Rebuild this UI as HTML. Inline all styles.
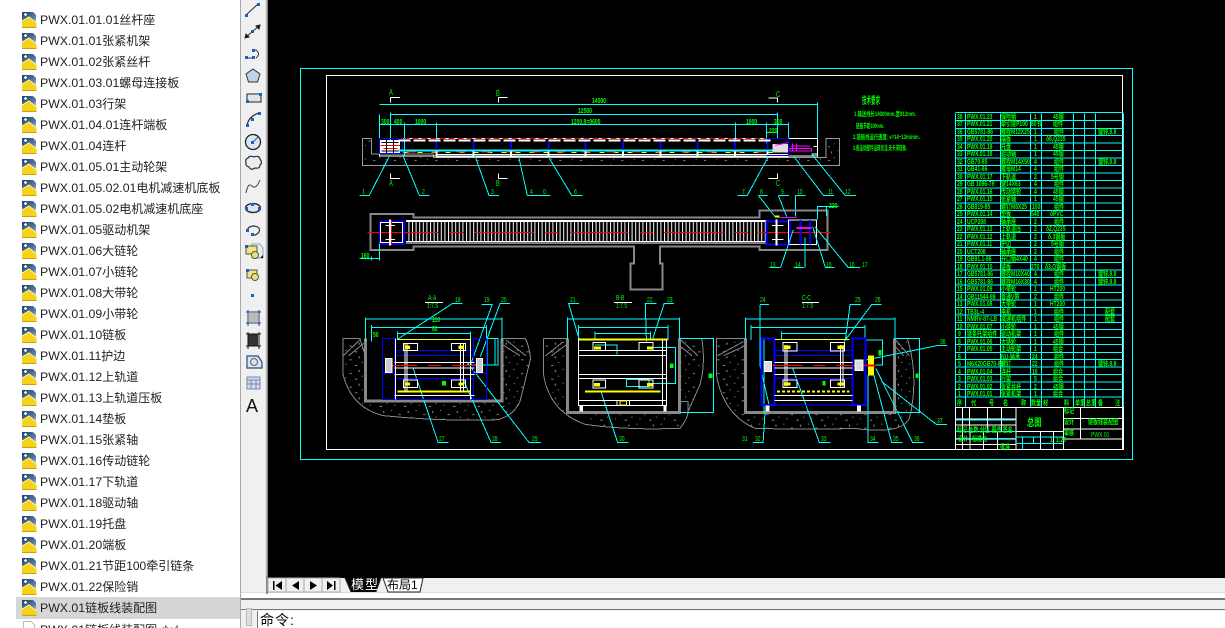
<!DOCTYPE html>
<html><head><meta charset="utf-8"><style>
html,body{margin:0;padding:0;width:1225px;height:628px;overflow:hidden;background:#fff}
body{position:relative;font-family:"Liberation Sans","Noto Sans CJK SC",sans-serif}
#list{position:absolute;left:0;top:0;width:240px;height:628px;overflow:hidden;background:#fff}
#list div{position:absolute;left:16px;width:224px;height:21px;line-height:22px;font-size:12px;color:#222;white-space:nowrap;padding-left:24px;box-sizing:border-box}
#list div.s{background:#d6d6d6;height:22px}
#list i{font-style:normal;font-size:12.3px}
#list svg{position:absolute;left:5px;top:2px;width:16px;height:17px}
#tb{position:absolute;left:240px;top:0;width:28px;height:578px;background:#f0f0f0;border-left:1px solid #a8a8a8;box-sizing:border-box}
#tb:after{content:"";position:absolute;right:0;top:0;width:3px;height:578px;background:linear-gradient(90deg,#fff,#a0a0a0 60%,#777)}
#cv{position:absolute;left:268px;top:0;width:957px;height:578px;background:#000}
#bot{position:absolute;left:240px;top:578px;width:985px;height:50px;background:#f0f0f0;border-left:1px solid #a8a8a8;box-sizing:border-box}
#cmd{position:absolute;left:257px;top:611px;width:968px;height:17px;background:#fff;font-size:14px;line-height:18px;letter-spacing:1px;color:#000;padding-left:2px;box-sizing:border-box;border-left:1px solid #777}
svg text{font-family:"Liberation Sans","Noto Sans CJK SC",sans-serif}
.t text{transform-box:fill-box;transform-origin:0 50%;transform:scaleX(.72)}
</style></head><body>
<svg width="0" height="0" style="position:absolute"><defs>
<linearGradient id="bl" x1="0" y1="0" x2="1" y2="1"><stop offset="0" stop-color="#1c3f6e"/><stop offset=".7" stop-color="#5d7fa3"/><stop offset="1" stop-color="#c9d5e0"/></linearGradient>
<symbol id="ic" viewBox="0 0 16 17"><path d="M1 1H12L15 4V12L1 9Z" fill="url(#bl)"/><path d="M3 3.500h3M4.500 2v3" stroke="#fff" stroke-width="1.200"/><path d="M1 10L8 6L15.500 12V16.500H1Z" fill="#f6d21c"/><path d="M1 10L8 6L15.500 12" fill="none" stroke="#fff59a"/><path d="M1 16.500H15.500" stroke="#c9a30a"/></symbol>
<pattern id="chain" width="10.800" height="60" patternUnits="userSpaceOnUse"><rect width="3" height="60" fill="#fff"/></pattern>
<pattern id="sp" width="62" height="41" patternUnits="userSpaceOnUse"><rect x="5" y="6" width="3" height="3" fill="#888"/><rect x="24" y="18" width="6" height="3" fill="#888"/><rect x="47" y="9" width="3" height="6" fill="#888"/><rect x="13" y="31" width="3" height="3" fill="#888"/><rect x="38" y="35" width="6" height="3" fill="#888"/><rect x="55" y="26" width="3" height="3" fill="#888"/></pattern>
</defs></svg>

<div id="list">
<div style="top:9px"><svg><use href="#ic"/></svg><i>PWX.01.01.01</i>丝杆座</div>
<div style="top:30px"><svg><use href="#ic"/></svg><i>PWX.01.01</i>张紧机架</div>
<div style="top:51px"><svg><use href="#ic"/></svg><i>PWX.01.02</i>张紧丝杆</div>
<div style="top:72px"><svg><use href="#ic"/></svg><i>PWX.01.03.01</i>螺母连接板</div>
<div style="top:93px"><svg><use href="#ic"/></svg><i>PWX.01.03</i>行架</div>
<div style="top:114px"><svg><use href="#ic"/></svg><i>PWX.01.04.01</i>连杆端板</div>
<div style="top:135px"><svg><use href="#ic"/></svg><i>PWX.01.04</i>连杆</div>
<div style="top:156px"><svg><use href="#ic"/></svg><i>PWX.01.05.01</i>主动轮架</div>
<div style="top:177px"><svg><use href="#ic"/></svg><i>PWX.01.05.02.01</i>电机减速机底板</div>
<div style="top:198px"><svg><use href="#ic"/></svg><i>PWX.01.05.02</i>电机减速机底座</div>
<div style="top:219px"><svg><use href="#ic"/></svg><i>PWX.01.05</i>驱动机架</div>
<div style="top:240px"><svg><use href="#ic"/></svg><i>PWX.01.06</i>大链轮</div>
<div style="top:261px"><svg><use href="#ic"/></svg><i>PWX.01.07</i>小链轮</div>
<div style="top:282px"><svg><use href="#ic"/></svg><i>PWX.01.08</i>大带轮</div>
<div style="top:303px"><svg><use href="#ic"/></svg><i>PWX.01.09</i>小带轮</div>
<div style="top:324px"><svg><use href="#ic"/></svg><i>PWX.01.10</i>链板</div>
<div style="top:345px"><svg><use href="#ic"/></svg><i>PWX.01.11</i>护边</div>
<div style="top:366px"><svg><use href="#ic"/></svg><i>PWX.01.12</i>上轨道</div>
<div style="top:387px"><svg><use href="#ic"/></svg><i>PWX.01.13</i>上轨道压板</div>
<div style="top:408px"><svg><use href="#ic"/></svg><i>PWX.01.14</i>垫板</div>
<div style="top:429px"><svg><use href="#ic"/></svg><i>PWX.01.15</i>张紧轴</div>
<div style="top:450px"><svg><use href="#ic"/></svg><i>PWX.01.16</i>传动链轮</div>
<div style="top:471px"><svg><use href="#ic"/></svg><i>PWX.01.17</i>下轨道</div>
<div style="top:492px"><svg><use href="#ic"/></svg><i>PWX.01.18</i>驱动轴</div>
<div style="top:513px"><svg><use href="#ic"/></svg><i>PWX.01.19</i>托盘</div>
<div style="top:534px"><svg><use href="#ic"/></svg><i>PWX.01.20</i>端板</div>
<div style="top:555px"><svg><use href="#ic"/></svg><i>PWX.01.21</i>节距100牵引链条</div>
<div style="top:576px"><svg><use href="#ic"/></svg><i>PWX.01.22</i>保险销</div>
<div class="s" style="top:597px"><svg><use href="#ic"/></svg><i>PWX.01</i>链板线装配图</div>
<div style="top:619px"><svg viewBox="0 0 16 17"><path d="M2.500 .5H10L13.500 4V16.500H2.500Z" fill="#fff" stroke="#bbb"/></svg><i>PWX.01</i>链板线装配图.dwl</div>
</div>

<div id="tb"></div>
<svg style="position:absolute;left:240px;top:0" width="25" height="425" viewBox="0 0 25 425">
<g fill="none" stroke="#222" stroke-width="1">
<path d="M6 15L18 4"/>
<path d="M6 37L19 26"/><path d="M5 38l1-4 3 3zM20 25l-4 1 3 3z" fill="#111"/>
<path d="M6 58H14M13 50H16Q21 54 16 58" stroke="#333"/>
<path d="M13 69L20 74L17.500 82H8.500L6 74Z" fill="#bcd3e8" stroke="#333"/>
<rect x="7" y="94" width="14" height="8" fill="#dbe6f0" stroke="#222"/>
<path d="M7 125Q9 116 19 113" stroke="#333" stroke-width="1.300"/>
<circle cx="13" cy="142" r="7.500" fill="#dbe6f0" stroke="#222" stroke-width="1.300"/><path d="M13 142L18 137" stroke="#1f5fbf"/>
<path d="M8 158q2-3 6-1q5-2 6 2q3 4 0 6q0 4-5 3q-4 3-6-1q-4-1-3-5q-1-3 2-4z" fill="#e8eef4" stroke="#333" stroke-width="1.200"/>
<path d="M6 193Q8 182 12 186T20 180" stroke="#444"/>
<ellipse cx="13" cy="208" rx="7.500" ry="4.500" fill="#dbe6f0" stroke="#222" stroke-width="1.300"/>
<path d="M7 231Q8 226 14 226Q21 227 19 232Q16 236 12 235" stroke="#333" stroke-width="1.200"/>
<path d="M12 244H20L23 248V258H12Z" fill="#e6eef6" stroke="#8aa"/><rect x="6" y="246" width="11" height="8" fill="#f4e27a" stroke="#555"/><circle cx="15" cy="255" r="3.500" fill="#e8e27a" stroke="#555"/>
<rect x="7" y="270" width="10" height="8" fill="#f4e27a" stroke="#555"/><circle cx="15" cy="277" r="3.500" fill="#e8e27a" stroke="#555"/>
<path d="M6 312H21M6 323H21M8 310V326M19 310V326" stroke="#1f3f70"/><rect x="9" y="313" width="9" height="9" fill="#bbb" stroke="none"/>
<rect x="8" y="334" width="10" height="12" fill="#333" stroke="none"/><path d="M6 334H21M6 346H21M8 332V349M19 332V349" stroke="#111"/>
<path d="M7 356H18L22 362V368H7Z" fill="#dbe6f0" stroke="#1f4f80" stroke-width="1.200"/><circle cx="14" cy="362" r="3.500" stroke="#777" stroke-width="1.300"/>
<rect x="7" y="377" width="13" height="12" fill="#d2dcf0" stroke="#7788aa"/><path d="M7 380H20M7 384H20M11 380V389M16 380V389" stroke="#7788aa"/>
</g>
<g fill="#1f5fbf"><rect x="17" y="3" width="3" height="3"/><rect x="5" y="14" width="3" height="3"/><rect x="11" y="30" width="3" height="3"/><rect x="5" y="56" width="3" height="3"/><rect x="12" y="56" width="3" height="3"/><rect x="12" y="49" width="3" height="3"/><rect x="6" y="100" width="3" height="3"/><rect x="19" y="93" width="3" height="3"/><rect x="6" y="124" width="3" height="3"/><rect x="18" y="112" width="3" height="3"/><rect x="11" y="118" width="3" height="3"/><rect x="11" y="141" width="3" height="3"/><rect x="5" y="207" width="3" height="3"/><rect x="18" y="207" width="3" height="3"/><rect x="11" y="203" width="3" height="3"/><rect x="6" y="229" width="3" height="3"/><rect x="11" y="233" width="3" height="3"/><rect x="5" y="245" width="3" height="3"/><rect x="6" y="269" width="3" height="3"/><rect x="11" y="294" width="3" height="3"/></g>
<path d="M20 258h3v-3z" fill="#111"/>
<text x="6" y="412" font-size="18" fill="#111" style="font-family:'Liberation Sans',sans-serif">A</text>
</svg>

<div id="cv"></div>

<svg style="position:absolute;left:0;top:0" width="1225" height="578" viewBox="0 0 1225 578" shape-rendering="crispEdges">
<style>g.v *{vector-effect:non-scaling-stroke}</style>
<rect x="300.500" y="68.500" width="832" height="391" fill="none" stroke="#0ff"/>
<rect x="326.500" y="75.500" width="796" height="374" fill="none" stroke="#fff"/>

<g class="v" transform="translate(340 80) scale(.33333)" fill="none" stroke-width="1">
<rect x="70" y="226" width="1426" height="28" fill="url(#sp)" stroke="none"/>
<rect x="70" y="180" width="24" height="42" fill="url(#sp)" stroke="none"/>
<rect x="1460" y="180" width="36" height="50" fill="url(#sp)" stroke="none"/>
<path d="M68 176V256H1498V176H1458V233H1432M95 176V222H280V233H1432M68 176H95" stroke="#999"/>
<path d="M118 104V176M1432 68V232M118 73H1432M151 97V190M151 103H1312M1312 97V176M118 134H1345M193 127V230M289 127V190M1186 127V190M1279 127V190M1345 127V230M1279 158H1312V176" stroke="#0ff"/>
<path d="M151 52V68M151 52H180M475 52V68M475 52H503M1312 54V68M1285 54H1312M151 280V296H180M475 280V296H503M1312 280V296H1285" stroke="#fff"/>
<rect x="118" y="176" width="1314" height="52" stroke="#fff"/>
<rect x="120" y="180" width="60" height="40" fill="#fff" stroke="none"/>
<path d="M122 197H180M130 206H172" stroke="#f00" stroke-width="1"/>
<path d="M124 188H175M124 213H175M140 180V220M160 180V220" stroke="#000"/>
<rect x="118" y="176" width="70" height="44" stroke="#00f"/>
<path d="M190 176H1290" stroke="#f00" stroke-dasharray="6 3"/>
<path d="M175 181H1300" stroke="#fff" stroke-dasharray="12 3" stroke-width="2"/>
<path d="M175 212H1300" stroke="#0ff" stroke-width="2"/>
<path d="M190 217H1300" stroke="#ff0" stroke-dasharray="5 9" stroke-width="1"/>
<path d="M200 216H1290" stroke="#f00" stroke-dasharray="9 16" stroke-width="1"/>
<path d="M288 224H1345M288 231H1345" stroke="#fff"/>
<path d="M289 184V205M401 184V205M513 184V205M625 184V205M737 184V205M849 184V205M961 184V205M1073 184V205M1185 184V205M1283 184V205" stroke="#00f" stroke-width="2"/>
<path d="M289 214V230M401 214V230M513 214V230M625 214V230M737 214V230M849 214V230M961 214V230M1073 214V230M1185 214V230M1283 214V230" stroke="#fff" stroke-width="2"/>
<path d="M1280 176H1345V226H1280" stroke="#00f"/>
<rect x="1298" y="192" width="46" height="26" fill="#ddd" stroke="none"/>
<path d="M1352 198H1410M1358 190V212M1370 190V212M1350 205H1415V213H1350Z" stroke="#f0f" stroke-width="1"/>
<path d="M1306 196L1345 188" stroke="#f0f"/>
<path d="M1420 200H1432V222H1415" stroke="#fff"/>
<path d="M150 225L88 346H58M188 225L238 346H268M405 228L447 346H477M535 225L562 346H632M625 230L695 346H728M1285 230L1222 346H1192M1362 230L1450 346H1482M1415 222L1515 346H1548M1255 346H1282M1255 346L1305 410M1315 346H1347M1315 346L1340 410M1366 346H1397M1366 346V410" stroke="#0ff"/>

<path d="M92 402H220V412H1258V392H1462V510H1258V500H960V550H968V628H872V550H882V500H220V510H92Z" stroke="#888" stroke-width="2"/>
<rect x="200" y="425" width="1078" height="60" fill="url(#chain)" stroke="none"/>
<path d="M198 422H1280M198 489H1280" stroke="#fff"/><path d="M198 425H1280M198 485H1280" stroke="#fff"/>
<path d="M82 457H295M330 457H370M402 457H582M616 457H654M690 457H865M902 457H940M972 457H1152M1185 457H1224M1254 457H1472" stroke="#f00"/>
<rect x="120" y="424" width="72" height="68" stroke="#00f" stroke-width="2"/>
<rect x="122" y="428" width="66" height="60" stroke="#fff"/>
<path d="M150 418V496" stroke="#fff" stroke-width="2"/><path d="M155 420V495" stroke="#f00"/>
<path d="M136 436H165M136 478H165" stroke="#fff"/>
<rect x="1280" y="424" width="70" height="70" stroke="#00f" stroke-width="2"/>
<path d="M1310 418V496" stroke="#fff" stroke-width="2"/><path d="M1296 436H1330M1296 478H1330" stroke="#fff"/>
<rect x="1345" y="420" width="85" height="74" stroke="#fff"/>
<path d="M1382 420V494M1410 420V494" stroke="#00f" stroke-width="2"/><path d="M1370 444H1414" stroke="#f0f" stroke-width="2"/>
<path d="M1320 412H1370" stroke="#f0f"/><path d="M1305 410H1318" stroke="#ff0" stroke-width="2"/>
<path d="M1395 472V562M1360 562H1392M1322 562L1360 450M1288 562H1322M1418 440L1456 562H1484M1425 440L1524 562H1560M1432 418V380H1495M1460 380V408M118 490V542M58 535H118M95 530V542" stroke="#0ff"/>
</g>

<g class="v" transform="translate(340 285) scale(.39541 .33333)" fill="none" stroke-width="1">
<path d="M8 160V270Q30 370 110 392Q260 410 400 404Q440 390 455 350Q470 280 482 220Q478 180 468 160H410V348H65V215L50 160Z" stroke="#888" fill="url(#sp)"/>
<path d="M515 160V270Q530 380 620 418Q720 436 860 430Q880 400 880 380V350H858V160H915Q925 240 910 300L880 380M515 160H575V382H860" stroke="#888"/>
<path d="M520 165H572V400Q560 390 530 300Z M612 388H860V425H640Z M862 165H912Q918 240 880 375H862Z" fill="url(#sp)" stroke="none"/>
<path d="M952 160V270Q970 390 1050 430Q1200 435 1300 430Q1420 450 1440 400Q1465 280 1435 160H1402V382H1025V160Z" stroke="#888" fill="url(#sp)"/>
<rect x="1027" y="160" width="374" height="222" fill="#000" stroke="none"/>
<rect x="66" y="160" width="344" height="188" fill="#000" stroke="none"/>
<path d="M65 160V348H410V160M575 160V382H858V160M1025 160V382H1402V160" stroke="#888" stroke-width="3"/>
<path d="M8 212L50 165M22 212L60 175M470 212L420 165M455 212L412 180M520 212L565 170M535 212L572 180M905 212L862 165M890 212L862 185M955 212L1020 170M970 212L1020 185M1440 212L1405 165M1425 212L1405 185" stroke="#888"/>

<path d="M65 98V170M410 98V170M65 102H410M80 120V170M370 120V170M80 127H370M145 140V165M330 140V165M145 145H330M340 160H400V240H320M372 160V240M392 160V240M145 163L285 55H310M330 240L385 58H358M355 215L405 55H430M185 250L248 472H275M310 280L382 472H407M320 230L478 472H508" stroke="#0ff"/>
<path d="M108 160H138V343H108ZM338 160H370V343H338ZM138 196H338M138 211H338M138 281H338M108 343H370" stroke="#00f" stroke-width="1"/>
<path d="M108 215V265H138M338 215V265H370" stroke="#00f"/>
<path d="M145 163H330" stroke="#ff0" stroke-width="1"/><path d="M145 320H330" stroke="#ff0" stroke-width="2"/>
<path d="M138 232H340M138 249H340M138 268H340M138 331H340M140 160V343M330 160V343M165 175V320M170 175V320M305 175V320M312 175V320" stroke="#fff"/>
<path d="M115 241H195M223 241H255M283 241H360" stroke="#f00" stroke-width="1"/>
<rect x="160" y="175" width="36" height="22" stroke="#fff"/><rect x="282" y="175" width="36" height="22" stroke="#fff"/><rect x="160" y="285" width="36" height="22" stroke="#fff"/><rect x="282" y="285" width="36" height="22" stroke="#fff"/>
<rect x="163" y="182" width="14" height="10" fill="#ff0" stroke="none"/><rect x="300" y="182" width="14" height="10" fill="#ff0" stroke="none"/><rect x="163" y="292" width="14" height="10" fill="#ff0" stroke="none"/><rect x="300" y="292" width="14" height="10" fill="#ff0" stroke="none"/>
<rect x="115" y="220" width="16" height="42" fill="#ccc" stroke="#fff"/><rect x="345" y="220" width="16" height="42" fill="#ccc" stroke="#fff"/>
<rect x="258" y="288" width="10" height="14" fill="#0f0" stroke="none"/>
<path d="M215 52H260" stroke="#fff"/>

<path d="M575 98V165M858 98V165M575 102H858M603 120V165M830 120V165M603 127H830M645 140V165M785 140V165M645 145H785M605 163L578 55H604M775 170L772 55H800M790 165L820 55H845M660 320L702 472H730M645 180H700V208M782 188H848V295H790M725 283H782V305H725ZM858 160H945V382H858" stroke="#0ff"/>
<path d="M605 163H828" stroke="#ff0" stroke-width="2"/><path d="M620 320H810" stroke="#ff0" stroke-width="2"/>
<path d="M603 160V362H826V160M603 196H826M603 211H826M603 268H826M603 281H826M603 346H826M816 160V362" stroke="#fff"/>
<rect x="640" y="173" width="32" height="24" stroke="#fff"/><rect x="756" y="173" width="36" height="24" stroke="#fff"/><rect x="640" y="285" width="32" height="24" stroke="#fff"/><rect x="756" y="285" width="36" height="24" stroke="#fff"/>
<rect x="642" y="184" width="18" height="10" fill="#ff0" stroke="none"/><rect x="776" y="184" width="16" height="10" fill="#ff0" stroke="none"/><rect x="642" y="294" width="16" height="10" fill="#ff0" stroke="none"/><rect x="776" y="294" width="14" height="10" fill="#ff0" stroke="none"/>
<rect x="700" y="346" width="32" height="16" stroke="#fff"/><rect x="708" y="348" width="16" height="12" stroke="#ff0"/>
<rect x="606" y="362" width="8" height="18" fill="#fff" stroke="none"/><rect x="818" y="362" width="8" height="18" fill="#fff" stroke="none"/>
<rect x="835" y="235" width="8" height="14" fill="#0f0" stroke="none"/><rect x="932" y="265" width="10" height="14" fill="#0f0" stroke="none"/>
<path d="M693 52H738" stroke="#fff"/>

<path d="M1025 98V165M1403 98V165M1025 102H1403M1040 120V165M1328 120V165M1040 127H1328M1116 140V165M1280 140V165M1116 145H1280M1072 160V382M1062 60V240L1085 360M1062 58H1085M1278 165L1290 58H1318M1275 170L1345 58H1370M1145 250L1212 472H1240M1330 165H1372V240H1330M1403 160H1465V382H1403M1330 225L1510 182H1535M1370 290L1508 418H1535M1335 270V472H1362M1350 270L1395 472H1422M1355 250L1448 472H1476M1075 380L1070 472H1045" stroke="#0ff"/>
<rect x="1066" y="160" width="33" height="200" stroke="#00f" stroke-width="2"/><rect x="1296" y="160" width="33" height="200" stroke="#00f" stroke-width="2"/>
<path d="M1099 196H1296M1099 211H1296M1099 281H1296M1099 360H1296" stroke="#00f"/>
<path d="M1100 163H1288" stroke="#ff0" stroke-width="1"/><path d="M1105 320H1288" stroke="#ff0" stroke-width="2" stroke-dasharray="3 2"/>
<path d="M1099 232H1296M1099 249H1296M1099 268H1296M1099 331H1296M1099 346H1296M1125 180V305M1130 180V305M1266 180V305M1272 180V305" stroke="#fff"/>
<path d="M1072 241H1170M1197 241H1228M1255 241H1355" stroke="#f00" stroke-width="1"/>
<rect x="1120" y="172" width="36" height="26" stroke="#fff"/><rect x="1240" y="172" width="36" height="26" stroke="#fff"/><rect x="1120" y="285" width="36" height="22" stroke="#fff"/><rect x="1240" y="285" width="36" height="22" stroke="#fff"/>
<rect x="1123" y="182" width="16" height="10" fill="#ff0" stroke="none"/><rect x="1258" y="182" width="16" height="10" fill="#ff0" stroke="none"/><rect x="1123" y="292" width="16" height="10" fill="#ff0" stroke="none"/><rect x="1258" y="292" width="16" height="10" fill="#ff0" stroke="none"/>
<rect x="1073" y="230" width="18" height="30" fill="#ddd" stroke="#fff"/><rect x="1303" y="225" width="20" height="32" fill="#ddd" stroke="#fff"/>
<rect x="1335" y="212" width="16" height="60" fill="#ff0" stroke="none"/><path d="M1332 241H1356" stroke="#f00" stroke-width="2"/>
<rect x="1076" y="362" width="10" height="18" fill="#fff" stroke="none"/><rect x="1308" y="362" width="10" height="18" fill="#fff" stroke="none"/>
<rect x="1220" y="288" width="8" height="14" fill="#0f0" stroke="none"/><rect x="1362" y="195" width="8" height="16" fill="#0f0" stroke="none"/><rect x="1455" y="265" width="8" height="14" fill="#0f0" stroke="none"/>
<path d="M1168 52H1212" stroke="#fff"/>
</g>

<g class="v" transform="translate(850 85) scale(.33333)" fill="none" stroke-width="1">
<path d="M316 82H820M316 85V967M346 85V967M451 85V937M541 85V967M575 85V967M671 85V967M703 85V967M736 85V967M820 85V967M316 107H820M316 130H820M316 152H820M316 174H820M316 197H820M316 219H820M316 242H820M316 264H820M316 287H820M316 309H820M316 331H820M316 354H820M316 376H820M316 398H820M316 421H820M316 443H820M316 466H820M316 488H820M316 511H820M316 533H820M316 555H820M316 578H820M316 600H820M316 622H820M316 645H820M316 667H820M316 690H820M316 712H820M316 734H820M316 757H820M316 779H820M316 802H820M316 824H820M316 846H820M316 869H820M316 891H820M316 914H820M316 936H820" stroke="#0ff"/>
<path d="M316 967H820V1093H316ZM640 967V1093M498 967V1093M316 1002H498M316 1020H498M316 1040H498M316 1062H498M316 1078H498M338 967V1040M358 967V1040M412 967V1040M454 967V1040M338 1040V1093M360 1040V1093M400 1040V1093M442 1040V1093M640 1000H820M640 1032H820M640 1062H820M692 967V1062M498 1040H640M572 1040V1093M610 1040V1093" stroke="#fff"/>
<path d="M316 1005H498M316 1040H498M316 1060H498M498 1056H640M498 1076H640M518 1056V1093M550 1056V1076" stroke="#0ff"/>
</g>
<g font-size="7" fill="#0f0" font-weight="bold" shape-rendering="auto">
<text x="862" y="104" font-size="10" textLength="18" lengthAdjust="spacingAndGlyphs">技术要求</text>
<text x="854" y="116" font-size="6.500" textLength="62" lengthAdjust="spacingAndGlyphs">1.输送线长14000mm,宽912mm.</text>
<text x="856" y="128" font-size="6.500" textLength="28" lengthAdjust="spacingAndGlyphs">链板节距100mm.</text>
<text x="853" y="139" font-size="6.500" textLength="67" lengthAdjust="spacingAndGlyphs">2.链板线运行速度: v=14~13m/min.</text>
<text x="853" y="150" font-size="6.500" textLength="54" lengthAdjust="spacingAndGlyphs">3.各运动部件运转灵活,无卡滞现象.</text>
</g>
<g class="t" font-size="7" fill="#0f0" font-weight="bold" shape-rendering="auto">
<text x="957" y="119">38</text><text x="967" y="119">PWX.01.23</text><text x="1001" y="119">保险销</text><text x="1034" y="119">1</text><text x="1053" y="119">45钢</text>
<text x="957" y="126">37</text><text x="967" y="126">PWX.01.21</text><text x="1001" y="126">牵引链P100</text><text x="1031" y="126">80节</text><text x="1053" y="126">组件</text>
<text x="957" y="134">36</text><text x="967" y="134">GB5781-86</text><text x="1001" y="134">螺栓M12X25</text><text x="1034" y="134">1</text><text x="1054" y="134">组件</text><text x="1098" y="134">镀锌,8.8</text>
<text x="957" y="141">35</text><text x="967" y="141">PWX.01.20</text><text x="1001" y="141">端板</text><text x="1034" y="141">1</text><text x="1046" y="141">δ8,Q235</text>
<text x="957" y="149">34</text><text x="967" y="149">PWX.01.19</text><text x="1001" y="149">托盘</text><text x="1034" y="149">1</text><text x="1053" y="149">45钢</text>
<text x="957" y="156">33</text><text x="967" y="156">PWX.01.18</text><text x="1001" y="156">驱动轴</text><text x="1034" y="156">1</text><text x="1053" y="156">45钢</text>
<text x="957" y="164">32</text><text x="967" y="164">GB70-85</text><text x="1001" y="164">螺栓M14X50</text><text x="1034" y="164">4</text><text x="1054" y="164">组件</text><text x="1098" y="164">镀锌,8.8</text>
<text x="957" y="171">31</text><text x="967" y="171">GB41-86</text><text x="1001" y="171">螺母M14</text><text x="1034" y="171">4</text><text x="1054" y="171">组件</text>
<text x="957" y="179">30</text><text x="967" y="179">PWX.01.17</text><text x="1001" y="179">下轨道</text><text x="1034" y="179">2</text><text x="1051" y="179">5号钢</text>
<text x="957" y="186">29</text><text x="967" y="186">GB 1096-79</text><text x="1001" y="186">键14X63</text><text x="1034" y="186">4</text><text x="1054" y="186">组件</text>
<text x="957" y="194">28</text><text x="967" y="194">PWX.01.16</text><text x="1001" y="194">传动链轮</text><text x="1034" y="194">4</text><text x="1053" y="194">45钢</text>
<text x="957" y="201">27</text><text x="967" y="201">PWX.01.15</text><text x="1001" y="201">张紧轴</text><text x="1034" y="201">1</text><text x="1053" y="201">45钢</text>
<text x="957" y="209">26</text><text x="967" y="209">GB819-85</text><text x="1001" y="209">螺钉M8X25</text><text x="1032" y="209">100</text><text x="1054" y="209">组件</text>
<text x="957" y="216">25</text><text x="967" y="216">PWX.01.14</text><text x="1001" y="216">垫板</text><text x="1031" y="216">540</text><text x="1050" y="216">δPVC</text>
<text x="957" y="224">24</text><text x="967" y="224">UCP208</text><text x="1001" y="224">轴承座</text><text x="1034" y="224">2</text><text x="1054" y="224">组件</text>
<text x="957" y="231">23</text><text x="967" y="231">PWX.01.13</text><text x="1001" y="231">上轨道压</text><text x="1034" y="231">2</text><text x="1046" y="231">δ2,Q235</text>
<text x="957" y="239">22</text><text x="967" y="239">PWX.01.12</text><text x="1001" y="239">上轨道</text><text x="1034" y="239">2</text><text x="1048" y="239">δ.3钢板</text>
<text x="957" y="246">21</text><text x="967" y="246">PWX.01.11</text><text x="1001" y="246">护边</text><text x="1034" y="246">2</text><text x="1051" y="246">5号钢</text>
<text x="957" y="254">20</text><text x="967" y="254">UCT208</text><text x="1001" y="254">轴承座</text><text x="1034" y="254">2</text><text x="1054" y="254">组件</text>
<text x="957" y="261">19</text><text x="967" y="261">GB91.1-86</text><text x="1001" y="261">开口销4X40</text><text x="1034" y="261">4</text><text x="1054" y="261">组件</text>
<text x="957" y="269">18</text><text x="967" y="269">PWX.01.10</text><text x="1001" y="269">链板</text><text x="1031" y="269">270</text><text x="1045" y="269">δ3,Q钢板</text>
<text x="957" y="276">17</text><text x="967" y="276">GB5781-86</text><text x="1001" y="276">螺栓M10X40</text><text x="1034" y="276">4</text><text x="1054" y="276">组件</text><text x="1098" y="276">镀锌,8.8</text>
<text x="957" y="284">16</text><text x="967" y="284">GB5781-86</text><text x="1001" y="284">螺栓M16X30</text><text x="1034" y="284">4</text><text x="1054" y="284">组件</text><text x="1098" y="284">镀锌,8.8</text>
<text x="957" y="291">15</text><text x="967" y="291">PWX.01.09</text><text x="1001" y="291">小带轮</text><text x="1034" y="291">1</text><text x="1050" y="291">HT200</text>
<text x="957" y="299">14</text><text x="967" y="299">GB11544-89</text><text x="1001" y="299">普通V带</text><text x="1034" y="299">2</text><text x="1054" y="299">组件</text>
<text x="957" y="306">13</text><text x="967" y="306">PWX.01.08</text><text x="1001" y="306">大带轮</text><text x="1034" y="306">1</text><text x="1050" y="306">HT200</text>
<text x="957" y="314">12</text><text x="967" y="314">TB3L-4</text><text x="1001" y="314">电机</text><text x="1034" y="314">1</text><text x="1054" y="314">组件</text><text x="1105" y="314">配套</text>
<text x="957" y="321">11</text><text x="967" y="321">NMRV-87-LB</text><text x="1001" y="321">减速机组件</text><text x="1034" y="321">1</text><text x="1054" y="321">组件</text><text x="1105" y="321">配套</text>
<text x="957" y="329">10</text><text x="967" y="329">PWX.01.07</text><text x="1001" y="329">小链轮</text><text x="1034" y="329">1</text><text x="1053" y="329">45钢</text>
<text x="958" y="336">9</text><text x="967" y="336">链条托架组件</text><text x="1001" y="336">驱动机架</text><text x="1034" y="336">1</text><text x="1054" y="336">组件</text>
<text x="958" y="344">8</text><text x="967" y="344">PWX.01.06</text><text x="1001" y="344">大链轮</text><text x="1034" y="344">1</text><text x="1053" y="344">45钢</text>
<text x="958" y="351">7</text><text x="967" y="351">PWX.01.05</text><text x="1001" y="351">主动轮架</text><text x="1034" y="351">1</text><text x="1053" y="351">组合</text>
<text x="958" y="359">6</text><text x="1001" y="359">NU-轴承</text><text x="1032" y="359">24</text><text x="1054" y="359">组件</text>
<text x="958" y="366">5</text><text x="967" y="366">M6X20GB70-85</text><text x="1001" y="366">螺钉</text><text x="1032" y="366">22</text><text x="1054" y="366">组件</text><text x="1098" y="366">镀锌,8.8</text>
<text x="958" y="374">4</text><text x="967" y="374">PWX.01.04</text><text x="1001" y="374">连杆</text><text x="1032" y="374">10</text><text x="1053" y="374">组合</text>
<text x="958" y="381">3</text><text x="967" y="381">PWX.01.03</text><text x="1001" y="381">行架</text><text x="1034" y="381">5</text><text x="1053" y="381">组合</text>
<text x="958" y="389">2</text><text x="967" y="389">PWX.01.02</text><text x="1001" y="389">张紧丝杆</text><text x="1034" y="389">2</text><text x="1053" y="389">45钢</text>
<text x="958" y="396">1</text><text x="967" y="396">PWX.01.01</text><text x="1001" y="396">张紧机架</text><text x="1034" y="396">1</text><text x="1053" y="396">组合</text>
<text x="957" y="405">序</text><text x="971" y="405">代</text><text x="989" y="405">号</text><text x="1003" y="405">名</text><text x="1021" y="405">称</text><text x="1031" y="405">数量</text><text x="1043" y="405">材</text><text x="1064" y="405">料</text><text x="1075" y="405">单重</text><text x="1086" y="405">总重</text><text x="1098" y="405">备</text><text x="1115" y="405">注</text>
<text x="1027" y="426" font-size="10">总图</text>
<text x="1064" y="413">标记</text><text x="1064" y="424">设计</text><text x="1064" y="435">审核</text>
<text x="1088" y="424">链板线装配图</text>
<text x="1091" y="437" font-weight="normal">PWX.01</text>
<text x="957" y="432">标记 处数 分区 更改 签名</text>
<text x="958" y="441">设计</text><text x="972" y="441">标准化</text>
<text x="1050" y="442">1</text><text x="1056" y="442">1:20</text>
<text x="1000" y="449">批准</text>
</g>
<g class="t" fill="#0f0" font-size="7" shape-rendering="auto">
<text x="389" y="95" font-size="8">A</text><text x="496" y="96" font-size="8">B</text><text x="776" y="97" font-size="8">C</text>
<text x="389" y="186" font-size="8">A</text><text x="496" y="186" font-size="8">B</text><text x="776" y="186" font-size="8">C</text>
<text x="592" y="103" font-weight="bold">14000</text><text x="578" y="113" font-weight="bold">12500</text>
<text x="381" y="124" font-weight="bold">300</text><text x="394" y="124" font-weight="bold">400</text><text x="415" y="124" font-weight="bold">1000</text><text x="571" y="124" font-weight="bold">1200.8=9600</text><text x="746" y="124" font-weight="bold">1000</text><text x="774" y="124" font-weight="bold">300</text><text x="769" y="133" font-weight="bold">220</text>
<text x="362" y="194">1</text><text x="422" y="194">2</text><text x="491" y="194">3</text><text x="530" y="194">4</text><text x="543" y="194">0</text><text x="574" y="194">6</text><text x="742" y="194">7</text><text x="760" y="194">8</text><text x="781" y="194">9</text><text x="797" y="194">10</text><text x="828" y="194">11</text><text x="845" y="194">12</text>
<text x="770" y="267">13</text><text x="795" y="267">14</text><text x="826" y="267">15</text><text x="849" y="267">16</text><text x="862" y="267">17</text><text x="829" y="208" font-weight="bold">220</text><text x="361" y="258" font-weight="bold">160</text>
<text x="428" y="300">A-A</text><text x="427" y="308">1:7.5</text>
<text x="616" y="300">B-B</text><text x="616" y="308">1:7.5</text>
<text x="802" y="300">C-C</text><text x="802" y="308">1:7.5</text>
<text x="455" y="302">18</text><text x="484" y="302">19</text><text x="501" y="302">20</text><text x="570" y="302">21</text><text x="647" y="302">22</text><text x="667" y="302">23</text><text x="760" y="302">24</text><text x="855" y="302">25</text><text x="875" y="302">26</text><text x="940" y="344">38</text><text x="937" y="423">37</text>
<text x="439" y="441">27</text><text x="492" y="441">28</text><text x="532" y="441">29</text><text x="619" y="441">30</text><text x="742" y="441">31</text><text x="755" y="441">32</text><text x="821" y="441">33</text><text x="870" y="441">34</text><text x="893" y="441">35</text><text x="914" y="441">36</text>
<text x="373" y="337" font-weight="bold">50</text><text x="432" y="322" font-weight="bold">110</text><text x="432" y="331" font-weight="bold">80</text>
</g>
</svg>

<div id="bot">
<div style="position:absolute;left:0;top:14px;width:985px;height:1px;background:#ddd"></div>
<div style="position:absolute;left:0;top:15px;width:985px;height:5px;background:#fff"></div>
<div style="position:absolute;left:0;top:20px;width:985px;height:2px;background:#777"></div>
<div style="position:absolute;left:0;top:31px;width:985px;height:1px;background:#777"></div>
<div style="position:absolute;left:5px;top:30px;width:6px;height:18px;background:#ddd;border:1px solid #bbb;box-sizing:border-box"></div>
</div>
<svg style="position:absolute;left:266px;top:576px" width="170" height="20" viewBox="0 0 170 20">
<rect x="0" y="0" width="2" height="18" fill="#888"/>
<rect x="2" y="2" width="72" height="14" fill="#f0f0f0" stroke="#aaa"/>
<path d="M20 2V16M38 2V16M56 2V16" stroke="#aaa"/>
<path d="M7 5V14H8.500V5ZM16 5L9.500 9.500L16 14Z" fill="#000"/>
<path d="M33 5L26 9.500L33 14Z" fill="#000"/>
<path d="M44 5L51 9.500L44 14Z" fill="#000"/>
<path d="M61 5L67 9.500L61 14ZM68 5V14H69.500V5Z" fill="#000"/>
<path d="M79 2H115L110 16H85Z" fill="#000"/>
<path d="M79 2L85 16M115 2L110 16" stroke="#333" fill="none"/>
<path d="M117 2H157L154 16H122Z" fill="#fff" stroke="#222"/>
<text x="85" y="13" font-size="13" fill="#fff" letter-spacing="1">模型</text>
<text x="121" y="13" font-size="12" fill="#000">布局1</text>
</svg>
<div id="cmd">命令:</div>
</body></html>
